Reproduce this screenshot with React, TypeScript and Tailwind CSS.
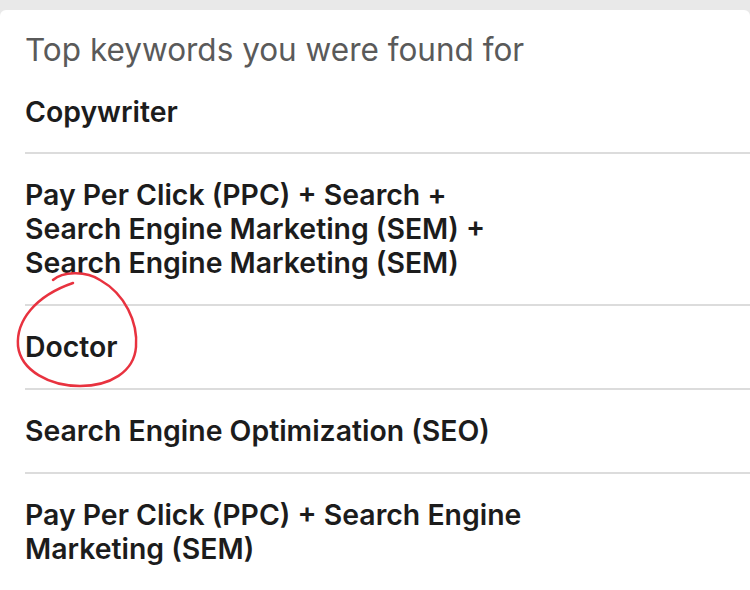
import React from "react";

const items: string[][] = [
  ["Copywriter"],
  ["Pay Per Click (PPC) + Search +", "Search Engine Marketing (SEM) +", "Search Engine Marketing (SEM)"],
  ["Doctor"],
  ["Search Engine Optimization (SEO)"],
  ["Pay Per Click (PPC) + Search Engine", "Marketing (SEM)"],
];

export default function App() {
  return (
    <div
      className="w-[750px] h-[590px] bg-[#e9e9e9] overflow-hidden pt-[10px]"
      style={{ fontFamily: "Inter, 'Noto Sans', sans-serif" }}
    >
      <div className="relative bg-white h-full rounded-tl-[6px] rounded-tr-[6px]">
        <div className="pl-[25px] pt-[23px] text-[31.5px] leading-[34px] text-[#5a5a5a] font-normal">
          Top keywords you were found for
        </div>
        <div className="pl-[25px] pt-[28px]">
          {items.map((lines, i) => (
            <div
              key={i}
              className={
                "pr-4 text-[28.4px] leading-[34px] font-semibold text-[#1c1c1c] " +
                (i === 0 ? "pt-0 pb-[23px] " : "pt-[24px] pb-[24px] ") +
                (i < items.length - 1 ? "border-b-2 border-[#dcdcdc]" : "")
              }
            >
              {lines.map((l, j) => (
                <div key={j}>{l}</div>
              ))}
            </div>
          ))}
        </div>
        <svg
          className="absolute left-0 top-0 pointer-events-none"
          width="750"
          height="580"
          viewBox="0 0 750 580"
        >
          <path
            d="M 53 270 C 62 262, 85 260, 100 270 C 125 284, 138 312, 136 337 C 134 362, 110 376, 80 376 C 50 376, 21 361, 18 336 C 16 311, 35 286, 73 273"
            fill="none"
            stroke="#e8323f"
            strokeWidth="2.5"
            strokeLinecap="round"
          />
        </svg>
      </div>
    </div>
  );
}
